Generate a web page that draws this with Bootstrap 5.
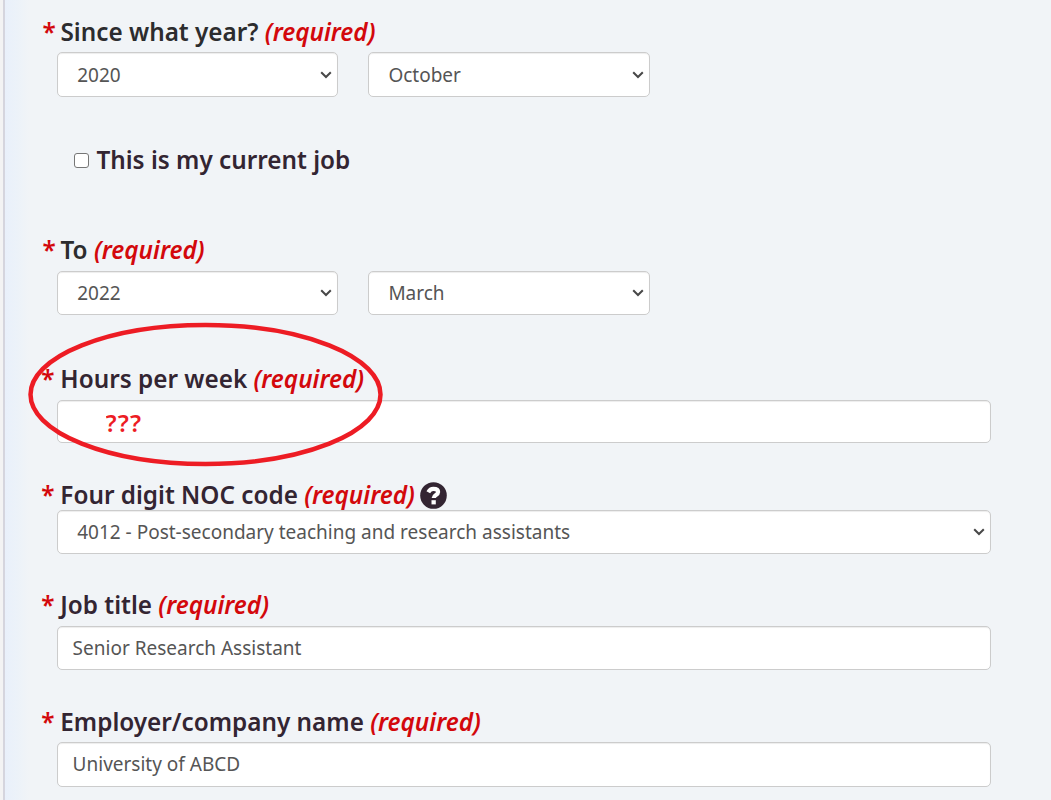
<!DOCTYPE html>
<html lang="en">
<head>
  <meta charset="UTF-8">
  <meta name="viewport" content="width=device-width, initial-scale=1.0">
  <title>Work experience</title>
  <link href="https://cdn.jsdelivr.net/npm/bootstrap@5.3.3/dist/css/bootstrap.min.css" rel="stylesheet">
  <style>
    body { background-color: #f3f3f4; font-family: "Noto Sans", sans-serif; overflow: hidden; }
    .panel { height: 800px; margin-left: 3px; padding: 17px 60px 0 37px; border-left: 2px solid #d5d5de;
      background: linear-gradient(90deg, #e9f0fb 0, #ecf2f9 12px, #f1f4f7 24px); }
    .field-label { display: flex; align-items: center; height: 30px; margin-bottom: 6px; line-height: 30px;
      font-size: 24.3px; font-weight: 600; color: #332532; white-space: pre; }
    .date-label { color: #2c2c2e; }
    .star, .req { color: #d3080c; }
    .star { width: 18.5px; }
    .field-label:not(.date-label) .star { margin-left: -.7px; width: 19px; }
    .date-label .star { padding-left: .5px; }
    .req { font-style: italic; }
    .controls { padding-left: 14.6px; }
    .dates { gap: 29.4px; }
    .controls .form-control, .controls .form-select { height: 44px; padding: 0 15px; border: 1px solid #ccc;
      border-radius: 5px; background-color: #fff; font-size: 19px; color: #555; box-shadow: inset 0 1px 1px rgba(0,0,0,.075); }
    .controls .form-select { padding-left: 19.6px; background-position: right 5px center; background-size: 12px 8px;
      background-image: url("data:image/svg+xml,%3Csvg xmlns='http://www.w3.org/2000/svg' viewBox='0 0 12 8'%3E%3Cpath d='M1.2 1.2 6 6l4.8-4.8' fill='none' stroke='%23484848' stroke-width='2'/%3E%3C/svg%3E"); }
    .controls .date-part { width: 281.8px; }
    .since .form-select { height: 45px; padding-top: 1px; }
    .current-job { height: 30px; margin: 48px 0 60px 32.4px; }
    .current-job .form-check-input { width: 15px; height: 15px; margin: 1px 7px 0 0; border: 1px solid #767676; border-radius: 3px; }
    .current-job label { font-size: 24.3px; font-weight: 600; line-height: 30px; color: #332532; }
    .controls .hours { height: 43px; padding: 1px 15px 0 48px; font-size: 24px; font-weight: 600; letter-spacing: 1.2px; color: #ed1c24; }
    .ring { position: absolute; left: 26px; top: 320px; }
  </style>
</head>
<body>
<form class="panel">
  <div class="since">
    <label class="field-label date-label" style="margin-bottom: 5px" for="sinceYear"><span class="star">*</span>Since what year? <span class="req">(required)</span></label>
    <div class="controls dates d-flex">
      <select class="form-select date-part" id="sinceYear"><option>2020</option></select>
      <select class="form-select date-part" aria-label="Since month"><option>October</option></select>
    </div>
  </div>

  <div class="current-job d-flex align-items-center">
    <input class="form-check-input" type="checkbox" id="currentJob">
    <label for="currentJob">This is my current job</label>
  </div>

  <div>
    <label class="field-label date-label" for="toYear"><span class="star">*</span>To <span class="req">(required)</span></label>
    <div class="controls dates d-flex">
      <select class="form-select date-part" id="toYear"><option>2022</option></select>
      <select class="form-select date-part" aria-label="To month"><option>March</option></select>
    </div>
  </div>

  <div style="margin-top: 49px">
    <label class="field-label" for="hours"><span class="star">*</span>Hours per week <span class="req">(required)</span></label>
    <div class="controls"><input class="form-control hours" id="hours" value="???"></div>
  </div>

  <div style="margin-top: 37px">
    <label class="field-label mb-0" for="noc"><span class="star">*</span>Four digit NOC code <span class="req">(required)</span><svg style="margin-left: 5.5px" width="27" height="27" viewBox="0 0 27 27"><circle cx="13.5" cy="13.5" r="13.3" fill="#332532"/><path d="M8.3 10.2C9.6 7.9 11 6.900 13.3 6.900c2.900 0 4.800 1.200 4.800 3.200 0 3.100-4.400 2.800-4.400 6" fill="none" stroke="#fff" stroke-width="4.2"/><path d="M11.5 18.200h4.300v4.200h-4.300z" fill="#fff"/></svg></label>
    <div class="controls"><select class="form-select" id="noc"><option>4012 - Post-secondary teaching and research assistants</option></select></div>
  </div>

  <div style="margin-top: 36px">
    <label class="field-label" for="jobTitle"><span class="star">*</span>Job title <span class="req">(required)</span></label>
    <div class="controls"><input class="form-control" id="jobTitle" value="Senior Research Assistant"></div>
  </div>

  <div style="margin-top: 37px">
    <label class="field-label" style="margin-bottom: 5px" for="employer"><span class="star">*</span>Employer/company name <span class="req">(required)</span></label>
    <div class="controls"><input class="form-control" style="height: 45px; padding-bottom: 2px" id="employer" value="University of ABCD"></div>
  </div>
</form>

<!-- marker around the hours field -->
<svg class="ring" width="360" height="150" viewBox="26 320 360 150"><ellipse cx="205.5" cy="394.5" rx="175" ry="69.5" fill="none" stroke="#ed1c24" stroke-width="4.5"/></svg>

<script src="https://cdn.jsdelivr.net/npm/bootstrap@5.3.3/dist/js/bootstrap.bundle.min.js"></script>
</body>
</html>
